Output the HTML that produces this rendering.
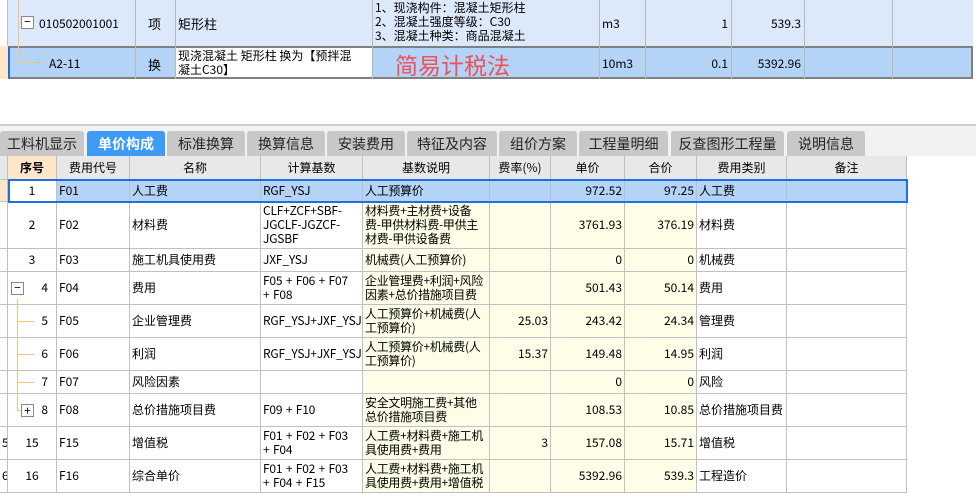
<!DOCTYPE html>
<html><head><meta charset="utf-8"><style>
*{margin:0;padding:0;box-sizing:border-box}
body{width:976px;height:499px;background:#fff;position:relative;overflow:hidden;font-family:"WenQuanYi Zen Hei","Noto Sans CJK SC",sans-serif;font-size:12px;color:#000}
.a{position:absolute}
.c{position:absolute;border-right:1px solid #c0c0c0;border-bottom:1px solid #c0c0c0;display:flex;align-items:center;padding:0 2px;line-height:14px;overflow:hidden;white-space:nowrap}
.r{justify-content:flex-end}
.m{justify-content:center}
.tab{position:absolute;top:131px;height:25px;background:#c8c8c8;border-radius:3px 3px 0 0;font-size:14px;display:flex;align-items:center;justify-content:center;color:#222}
</style></head><body>
<div class="a" style="left:0;top:0;width:8px;height:46px;background:#fff;border-right:1px solid #c0c0c0"></div>
<div class="a" style="left:0;top:46px;width:8px;height:33px;background:#fde7c8"></div>
<div class="a" style="left:8px;top:0;width:965px;height:46px;background:#dce9fb"></div>
<div class="a" style="left:8px;top:46px;width:965px;height:33px;background:#b3d3f7;border:2px solid #808080;border-left:2px solid #1e6fe0"></div>
<div class="a" style="left:135px;top:0;width:1px;height:79px;background:#b8b8b8"></div>
<div class="a" style="left:175px;top:0;width:1px;height:79px;background:#b8b8b8"></div>
<div class="a" style="left:372px;top:0;width:1px;height:79px;background:#b8b8b8"></div>
<div class="a" style="left:599px;top:0;width:1px;height:79px;background:#b8b8b8"></div>
<div class="a" style="left:645px;top:0;width:1px;height:79px;background:#b8b8b8"></div>
<div class="a" style="left:731px;top:0;width:1px;height:79px;background:#b8b8b8"></div>
<div class="a" style="left:804px;top:0;width:1px;height:79px;background:#b8b8b8"></div>
<div class="a" style="left:892px;top:0;width:1px;height:79px;background:#b8b8b8"></div>
<div class="a" style="left:18px;top:0;width:1px;height:62px;background:#f5c27a"></div>
<div class="a" style="left:18px;top:62px;width:26px;height:1px;background:#f5c27a"></div>
<div class="a" style="left:21px;top:16px;width:13px;height:13px;border:1px solid #888;background:#fff;font-size:12px;line-height:10px;text-align:center">−</div>
<div class="a" style="left:39px;top:15px">010502001001</div>
<div class="a" style="left:49px;top:55px">A2-11</div>
<div class="a" style="left:148px;top:14px;font-size:13px">项</div>
<div class="a" style="left:148px;top:55px;font-size:13px">换</div>
<div class="a" style="left:178px;top:14px;font-size:13px">矩形柱</div>
<div class="a" style="left:176px;top:48px;width:196px;height:29px;background:#fff;padding:1px 2px;line-height:14px;font-size:12px;white-space:nowrap">现浇混凝土 矩形柱  换为【预拌混<br>凝土C30】</div>
<div class="a" style="left:375px;top:1px;line-height:14px;font-size:12px">1、现浇构件：混凝土矩形柱<br>2、混凝土强度等级：C30<br>3、混凝土种类：商品混凝土</div>
<div class="a" style="left:395px;top:47px;font-size:23px;color:#f0505a;font-family:'Noto Sans CJK SC',sans-serif">简易计税法</div>
<div class="a" style="left:602px;top:15px">m3</div>
<div class="a" style="left:602px;top:55px">10m3</div>
<div class="a" style="left:660px;top:15px;width:68px;text-align:right">1</div>
<div class="a" style="left:660px;top:55px;width:68px;text-align:right">0.1</div>
<div class="a" style="left:735px;top:15px;width:66px;text-align:right">539.3</div>
<div class="a" style="left:735px;top:55px;width:66px;text-align:right">5392.96</div>
<div class="a" style="left:0;top:124px;width:976px;height:32px;background:#f2f2f2;border-top:2px solid #d0d0d0"></div>
<div class="tab" style="left:0;width:84px">工料机显示</div>
<div class="tab" style="left:87px;width:78px;background:#3d9bf6;color:#fff;font-weight:bold">单价构成</div>
<div class="tab" style="left:167px;width:78px">标准换算</div>
<div class="tab" style="left:247px;width:78px">换算信息</div>
<div class="tab" style="left:327px;width:78px">安装费用</div>
<div class="tab" style="left:407px;width:90px">特征及内容</div>
<div class="tab" style="left:499px;width:78px">组价方案</div>
<div class="tab" style="left:579px;width:89px">工程量明细</div>
<div class="tab" style="left:671px;width:113px">反查图形工程量</div>
<div class="tab" style="left:787px;width:78px">说明信息</div>
<div id="g"></div>
<script>
var cols=[0,8,57,130,261,363,490,551,625,697,787,907];
var rows=[156,180,202,249,272,305,338,371,394,427,460,493];
var H=["","序号","费用代号","名称","计算基数","基数说明","费率(%)","单价","合价","费用类别","备注"];
var D=[
["","1","F01","人工费","RGF_YSJ","人工预算价","","972.52","97.25","人工费",""],
["","2","F02","材料费","CLF+ZCF+SBF-<br>JGCLF-JGZCF-<br>JGSBF","材料费+主材费+设备<br>费-甲供材料费-甲供主<br>材费-甲供设备费","","3761.93","376.19","材料费",""],
["","3","F03","施工机具使用费","JXF_YSJ","机械费(人工预算价)","","0","0","机械费",""],
["","4","F04","费用","F05 + F06 + F07<br>+ F08","企业管理费+利润+风险<br>因素+总价措施项目费","","501.43","50.14","费用",""],
["","5","F05","企业管理费","RGF_YSJ+JXF_YSJ","人工预算价+机械费(人<br>工预算价)","25.03","243.42","24.34","管理费",""],
["","6","F06","利润","RGF_YSJ+JXF_YSJ","人工预算价+机械费(人<br>工预算价)","15.37","149.48","14.95","利润",""],
["","7","F07","风险因素","","","","0","0","风险",""],
["","8","F08","总价措施项目费","F09 + F10","安全文明施工费+其他<br>总价措施项目费","","108.53","10.85","总价措施项目费",""],
["5","15","F15","增值税","F01 + F02 + F03<br>+ F04","人工费+材料费+施工机<br>具使用费+费用","3","157.08","15.71","增值税",""],
["6","16","F16","综合单价","F01 + F02 + F03<br>+ F04 + F15","人工费+材料费+施工机<br>具使用费+费用+增值税","","5392.96","539.3","工程造价",""]];
var h="";
for(var i=0;i<11;i++){var bg=i==1?"#fde7c8":"#e8e8e8";h+='<div class="c m" style="left:'+cols[i]+'px;top:156px;width:'+(cols[i+1]-cols[i])+'px;height:24px;background:'+bg+';font-size:12px;'+(i==1?'font-weight:bold;':'')+'">'+H[i]+'</div>';}
for(var r=0;r<10;r++){for(var i=0;i<11;i++){
var cls="c";if(i==1)cls+=(r<3||r>7)?" m":" r";if(i>=6&&i<=8)cls+=" r";
var bg="#fff";if(i>=5&&i<=8)bg="#fefee8";
if(r==0&&i>0)bg="#b3d3f7";if(r==0&&i==0)bg="#fde7c8";if(r==0&&i==1)bg="#fff";
var pad=(i==1&&r>=3&&r<=7)?"padding-right:8px;":"";
var fs=(i==5)?"letter-spacing:-0.3px;":"";
if(i==4)fs="letter-spacing:-0.2px;word-spacing:1px;";
h+='<div class="'+cls+'" style="left:'+cols[i]+'px;top:'+rows[r+1]+'px;width:'+(cols[i+1]-cols[i])+'px;height:'+(rows[r+2]-rows[r+1])+'px;background:'+bg+';'+pad+fs+'"><div>'+D[r][i]+'</div></div>';}}
h+='<div class="a" style="left:8px;top:179px;width:900px;height:24px;border:2px solid #1e6fe0"></div>';
h+='<div class="a" style="left:17px;top:299px;width:1px;height:112px;background:#f5c27a"></div>';
[321,354,382].forEach(function(y){h+='<div class="a" style="left:17px;top:'+y+'px;width:17px;height:1px;background:#f5c27a"></div>';});
h+='<div class="a" style="left:17px;top:410px;width:4px;height:1px;background:#f5c27a"></div>';
h+='<div class="a" style="left:11px;top:282px;width:13px;height:13px;border:1px solid #888;background:#fff;line-height:10px;text-align:center">−</div>';
h+='<div class="a" style="left:21px;top:404px;width:13px;height:13px;border:1px solid #888;background:#fff;line-height:11px;text-align:center">+</div>';
document.getElementById("g").innerHTML=h;
</script>
</body></html>
